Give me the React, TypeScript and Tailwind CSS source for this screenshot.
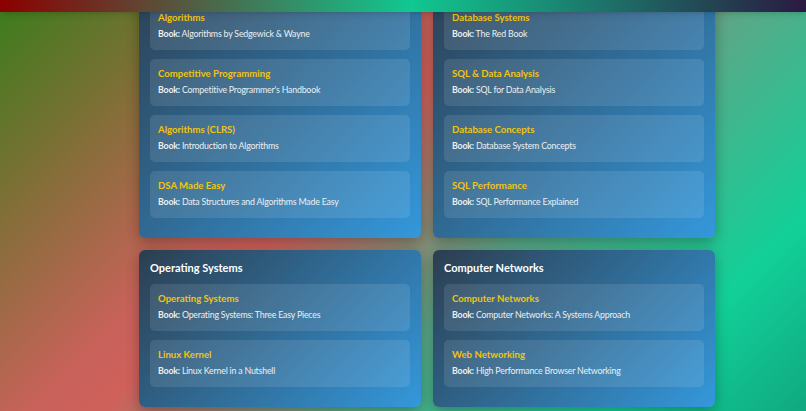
const sections = [
  {
    title: "Data Structures & Algorithms",
    books: [
      { topic: "Algorithms", book: "Algorithms by Sedgewick & Wayne" },
      { topic: "Competitive Programming", book: "Competitive Programmer's Handbook" },
      { topic: "Algorithms (CLRS)", book: "Introduction to Algorithms" },
      { topic: "DSA Made Easy", book: "Data Structures and Algorithms Made Easy" },
    ],
  },
  {
    title: "Databases",
    books: [
      { topic: "Database Systems", book: "The Red Book" },
      { topic: "SQL & Data Analysis", book: "SQL for Data Analysis" },
      { topic: "Database Concepts", book: "Database System Concepts" },
      { topic: "SQL Performance", book: "SQL Performance Explained" },
    ],
  },
  {
    title: "Operating Systems",
    books: [
      { topic: "Operating Systems", book: "Operating Systems: Three Easy Pieces" },
      { topic: "Linux Kernel", book: "Linux Kernel in a Nutshell" },
    ],
  },
  {
    title: "Computer Networks",
    books: [
      { topic: "Computer Networks", book: "Computer Networks: A Systems Approach" },
      { topic: "Web Networking", book: "High Performance Browser Networking" },
    ],
  },
];

export default function App() {
  return (
    <div
      className="h-screen overflow-hidden bg-[linear-gradient(135deg,#3a7d1c_0%,#7a7034_16%,#c8625a_36%,#d0605a_42%,#5aa888_62%,#12d098_84%,#10a880_100%)] font-['Lato','Liberation_Sans',sans-serif]"
    >
      {/* Top bar */}
      <div className="fixed top-0 inset-x-0 z-10 h-3 bg-[linear-gradient(90deg,#8b0000_0%,#10c890_51%,#2a1a40_100%)] shadow-md" />

      {/* Sections grid */}
      <div className="pl-12">
        <div className="mx-auto w-[576px] -mt-[31px] grid grid-cols-2 gap-3">
          {sections.map((s) => (
            <div
              key={s.title}
              className="rounded-md bg-[linear-gradient(135deg,#2c3e50,#3498db)] px-[11px] pt-[10px] pb-[11px] shadow-[0_4px_14px_rgba(0,0,0,0.3)]"
            >
              <h3 className="text-[11px] leading-[15px] font-bold text-white mb-[9px]">{s.title}</h3>
              {s.books.map((b) => (
                <div key={b.topic} className="mb-[9px] rounded-[5px] bg-white/10 px-2 pt-[7px] pb-[9px]">
                  <div className="text-[9.6px] leading-[15px] font-bold text-[#f1c40f] mb-px">{b.topic}</div>
                  <div className="text-[8.8px] leading-[15px] tracking-[-0.2px] text-[#ecf0f1]">
                    <span className="font-bold">Book:</span> {b.book}
                  </div>
                </div>
              ))}
            </div>
          ))}
        </div>
      </div>
    </div>
  );
}
